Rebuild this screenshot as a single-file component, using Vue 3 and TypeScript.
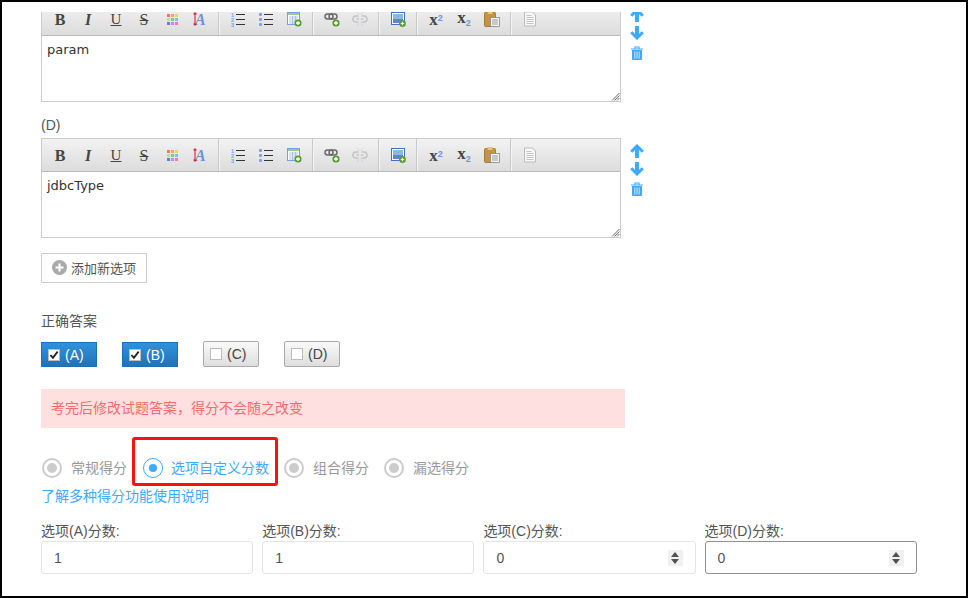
<script setup lang="ts">
import { ref } from "vue";

interface Editor {
  text: string;
  clipped: boolean;
}

const editors: Editor[] = [
  { text: "param", clipped: true },
  { text: "jdbcType", clipped: false },
];

const toolGroups: string[][] = [
  ["bold", "italic", "underline", "strike", "colors", "fontsize"],
  ["ol", "ul", "table"],
  ["link", "unlink"],
  ["image"],
  ["sup", "sub", "paste"],
  ["doc"],
];

const swatches = ["#ee7a6a", "#f2a65a", "#f0d45c", "#bfe08a", "#6fd08c", "#68c8e8", "#5f86d6", "#d884e0", "#ee78b8"];

const answers = ref([
  { label: "(A)", checked: true },
  { label: "(B)", checked: true },
  { label: "(C)", checked: false },
  { label: "(D)", checked: false },
]);

const modes = [
  { label: "常规得分", active: false },
  { label: "选项自定义分数", active: true },
  { label: "组合得分", active: false },
  { label: "漏选得分", active: false },
];

const scores = [
  { label: "选项(A)分数:", value: "1", spin: false, focus: false },
  { label: "选项(B)分数:", value: "1", spin: false, focus: false },
  { label: "选项(C)分数:", value: "0", spin: true, focus: false },
  { label: "选项(D)分数:", value: "0", spin: true, focus: true },
];
</script>

<template>
  <div class="frame">
    <template v-for="(ed, i) in editors" :key="i">
      <div v-if="i === 1" class="opt-label">(D)</div>
      <div class="opt-row" :class="{ clipped: ed.clipped }">
        <div class="editor">
          <div class="toolbar">
            <div v-for="(group, g) in toolGroups" :key="g" class="tool-group" :class="{ last: g === toolGroups.length - 1 }">
              <span v-for="tool in group" :key="tool" class="tool">
                <span v-if="tool === 'bold'" class="glyph bold">B</span>
                <span v-else-if="tool === 'italic'" class="glyph italic">I</span>
                <span v-else-if="tool === 'underline'" class="glyph under">U</span>
                <span v-else-if="tool === 'strike'" class="glyph strike">S</span>
                <span v-else-if="tool === 'sup'" class="glyph script">x<i class="sup">2</i></span>
                <span v-else-if="tool === 'sub'" class="glyph script">x<i class="sub">2</i></span>
                <span v-else-if="tool === 'colors'" class="swatches">
                  <i v-for="c in swatches" :key="c" :style="{ background: c }"></i>
                </span>
                <svg v-else-if="tool === 'fontsize'" width="16" height="16" viewBox="0 0 16 16">
                  <text x="3" y="13.500" font-family="Liberation Serif" font-size="16" font-weight="bold" font-style="italic" fill="#6f92d8">A</text>
                  <path d="M3 2v12M1.600 3.400 3 1.800l1.400 1.600M1.600 12.600 3 14.200l1.400-1.600" fill="none" stroke="#d8262c" stroke-width="1.100" />
                </svg>
                <svg v-else-if="tool === 'ol'" width="16" height="16" viewBox="0 0 16 16">
                  <text x="1" y="5.500" font-family="Liberation Sans" font-size="5.500" font-weight="bold" fill="#7c9ee0">1</text>
                  <text x="1" y="10.500" font-family="Liberation Sans" font-size="5.500" font-weight="bold" fill="#7c9ee0">2</text>
                  <text x="1" y="15.500" font-family="Liberation Sans" font-size="5.500" font-weight="bold" fill="#7c9ee0">3</text>
                  <path d="M6 3.500h9M6 8.500h9M6 13.500h9" stroke="#333" stroke-width="1" />
                </svg>
                <svg v-else-if="tool === 'ul'" width="16" height="16" viewBox="0 0 16 16">
                  <rect x="1" y="2" width="3" height="3" rx="1" fill="#7c9ee0" />
                  <rect x="1" y="7" width="3" height="3" rx="1" fill="#7c9ee0" />
                  <rect x="1" y="12" width="3" height="3" rx="1" fill="#7c9ee0" />
                  <path d="M6 3.500h9M6 8.500h9M6 13.500h9" stroke="#333" stroke-width="1" />
                </svg>
                <svg v-else-if="tool === 'table'" width="16" height="16" viewBox="0 0 16 16">
                  <rect x="1.500" y="1.500" width="12" height="12" fill="#fff" stroke="#7c9ee0" />
                  <rect x="2" y="2" width="11" height="2" fill="#9ccb7a" />
                  <path d="M3 6h9M3 8h9M3 10h9M3 12h9M6.500 5v8M9.500 5v8" stroke="#9db8e6" stroke-width=".8" />
                  <circle cx="12" cy="12" r="3.600" fill="#5a9a32" />
                  <path d="M10 12h4M12 10v4" stroke="#fff" stroke-width="1.300" />
                </svg>
                <svg v-else-if="tool === 'link'" width="16" height="16" viewBox="0 0 16 16">
                  <rect x="1" y="3" width="8" height="5" rx="2.500" fill="none" stroke="#6a6a6a" stroke-width="1.500" />
                  <rect x="5" y="3" width="8" height="5" rx="2.500" fill="none" stroke="#6a6a6a" stroke-width="1.500" />
                  <circle cx="12" cy="12" r="3.600" fill="#5a9a32" />
                  <path d="M10 12h4M12 10v4" stroke="#fff" stroke-width="1.300" />
                </svg>
                <svg v-else-if="tool === 'unlink'" width="16" height="16" viewBox="0 0 16 16">
                  <path d="M6.500 5H4a3 3 0 0 0 0 6h2.500M9.500 5H12a3 3 0 0 1 0 6H9.500M4.500 8h2.500M9 8h2.500" fill="none" stroke="#c4c4c4" stroke-width="1.500" />
                  <path d="M5.500 1l1.500 3M10.500 1 9 4M5.500 15 7 12M10.500 15 9 12" stroke="#c6d4ee" stroke-width="1" />
                </svg>
                <svg v-else-if="tool === 'image'" width="16" height="16" viewBox="0 0 16 16">
                  <rect x="1.500" y="1.500" width="13" height="12" fill="#fff" stroke="#4a6fb5" />
                  <rect x="3" y="3" width="10" height="9" fill="#8fb4e6" />
                  <rect x="3" y="8" width="10" height="4" fill="#5d87c8" />
                  <circle cx="12.500" cy="12.500" r="3.400" fill="#5a9a32" />
                  <path d="M10.700 12.500h3.600M12.500 10.700v3.600" stroke="#fff" stroke-width="1.200" />
                </svg>
                <svg v-else-if="tool === 'paste'" width="16" height="16" viewBox="0 0 16 16">
                  <rect x="0.500" y="1.500" width="11" height="14" rx="1" fill="#c8914a" stroke="#9a6a2a" stroke-width=".8" />
                  <rect x="3.500" y="0" width="5" height="3" fill="#e6c76a" />
                  <rect x="6.500" y="6.500" width="9" height="9" fill="#f4f4f4" stroke="#888" stroke-width=".8" />
                  <path d="M8 9h6M8 11h6M8 13h6" stroke="#888" stroke-width=".8" />
                </svg>
                <svg v-else-if="tool === 'doc'" width="16" height="16" viewBox="0 0 16 16">
                  <path d="M2.500 1h8l3 3v11h-11z" fill="#f8f8f8" stroke="#bbb" />
                  <path d="M4.500 4.500h5M4.500 6.500h7M4.500 8.500h7M4.500 10.500h7M4.500 12.500h7" stroke="#b5b5b5" stroke-width=".8" />
                </svg>
              </span>
            </div>
          </div>
          <div class="content">
            {{ ed.text }}
            <svg class="grip" width="9" height="9" viewBox="0 0 9 9">
              <path d="M8.500 1 1 8.500M8.500 3.500 3.500 8.500M8.500 6 6 8.500" stroke="#666" stroke-width="1" />
            </svg>
          </div>
        </div>
        <div class="side">
          <svg width="14" height="14" viewBox="0 0 14 14"><path d="M7 14V4" stroke="#3fa9ff" stroke-width="4" /><path d="M1.200 7.800 7 2l5.800 5.800" fill="none" stroke="#3fa9ff" stroke-width="3" /></svg>
          <svg width="14" height="14" viewBox="0 0 14 14"><path d="M7 0v10" stroke="#3fa9ff" stroke-width="4" /><path d="M1.200 6.200 7 12l5.800-5.800" fill="none" stroke="#3fa9ff" stroke-width="3" /></svg>
          <svg class="trash" width="14" height="14" viewBox="0 0 14 14">
            <path d="M1 3h12M5 3V1h4v2" fill="none" stroke="#3fa9ff" stroke-width="1.200" />
            <path d="M2 4h10v9a1 1 0 0 1-1 1H3a1 1 0 0 1-1-1z" fill="#3fa9ff" />
            <path d="M4.800 5.500v7M7 5.500v7M9.200 5.500v7" stroke="#cfe9ff" stroke-width="1" />
          </svg>
        </div>
      </div>
    </template>

    <button class="add-btn">
      <svg width="15" height="15" viewBox="0 0 15 15">
        <circle cx="7.500" cy="7.500" r="7.500" fill="#aaa" />
        <path d="M3.500 7.500h8M7.500 3.500v8" stroke="#fff" stroke-width="2.200" />
      </svg>
      添加新选项
    </button>

    <div class="section-title">正确答案</div>
    <div class="answers">
      <label v-for="a in answers" :key="a.label" class="answer" :class="{ on: a.checked }">
        <span class="box">
          <svg v-if="a.checked" width="10" height="10" viewBox="0 0 11 11"><path d="M1.500 5.500 4.300 8.500 9.500 1.800" fill="none" stroke="#222" stroke-width="2" /></svg>
        </span>
        {{ a.label }}
      </label>
    </div>

    <div class="alert">考完后修改试题答案，得分不会随之改变</div>

    <div class="modes">
      <div v-for="m in modes" :key="m.label" class="mode" :class="{ active: m.active }">
        <span class="radio"><i></i></span>
        <span class="mode-text">{{ m.label }}</span>
      </div>
      <div class="highlight"></div>
    </div>
    <a class="help">了解多种得分功能使用说明</a>

    <div class="scores">
      <div v-for="s in scores" :key="s.label" class="score">
        <div class="score-label">{{ s.label }}</div>
        <div class="field" :class="{ focus: s.focus }">
          <input type="text" :value="s.value" />
          <span v-if="s.spin" class="spin"><i class="up"></i><i class="down"></i></span>
        </div>
      </div>
    </div>
  </div>
</template>

<style scoped>
.frame {
  width: 968px;
  height: 598px;
  box-sizing: border-box;
  border: 2px solid #000;
  padding: 10px 0 0 39px;
  overflow: hidden;
  background: #fff;
  font-family: "Liberation Sans", "Noto Sans CJK SC", sans-serif;
  font-size: 14px;
  color: #555;
}

.opt-row {
  display: flex;
  height: 100px;
}
.opt-row.clipped {
  height: 90px;
  overflow: hidden;
  align-items: flex-end;
}
.opt-label {
  margin-top: 13px;
  height: 20px;
  line-height: 20px;
  margin-bottom: 3px;
}

.editor {
  width: 580px;
  height: 100px;
  flex: none;
  box-sizing: border-box;
  border: 1px solid #ccc;
  display: flex;
  flex-direction: column;
}
.toolbar {
  height: 33px;
  flex: none;
  box-sizing: border-box;
  border-bottom: 1px solid #bbb;
  background: linear-gradient(#f3f3f3, #dcdcdc);
  display: flex;
}
.tool-group {
  display: flex;
  padding: 0 4px;
  border-right: 1px solid #c8c8c8;
  box-shadow: 1px 0 0 #f4f4f4;
  margin-right: 1px;
}
.tool-group.last {
  border-right: none;
  box-shadow: none;
}
.tool {
  width: 28px;
  display: flex;
  align-items: center;
  justify-content: center;
}
.glyph {
  font-family: "Liberation Serif", serif;
  font-size: 16px;
  font-weight: bold;
  color: #444;
  line-height: 13px;
}
.glyph.italic {
  font-style: italic;
}
.glyph.under {
  font-size: 15px;
  font-weight: normal;
  text-decoration: underline;
}
.glyph.strike {
  font-weight: normal;
  text-decoration: line-through;
}
.glyph.script {
  font-size: 17px;
  display: flex;
}
.glyph i {
  font: bold 9px/9px "Liberation Sans", sans-serif;
  color: #6f92d8;
}
.sup {
  margin-top: 1px;
}
.sub {
  margin-top: 8px;
}
.swatches {
  width: 11px;
  height: 11px;
  display: grid;
  grid-template-columns: repeat(3, 3px);
  grid-auto-rows: 3px;
  gap: 1px;
}
.content {
  flex: 1;
  position: relative;
  padding: 5px;
  font-family: "DejaVu Sans", sans-serif;
  font-size: 13px;
  line-height: 17px;
  color: #333;
}
.grip {
  position: absolute;
  right: 0;
  bottom: 0;
}

.side {
  margin-left: 9px;
  width: 14px;
  padding-top: 6px;
  display: flex;
  flex-direction: column;
  gap: 4px;
  height: 100px;
  box-sizing: border-box;
  flex: none;
}
.trash {
  margin-top: 2px;
}

.add-btn {
  display: flex;
  align-items: center;
  gap: 4px;
  margin-top: 15px;
  width: 106px;
  height: 30px;
  box-sizing: border-box;
  padding: 0 0 2px 10px;
  background: #fff;
  border: 1px solid #ccc;
  font: 13px "Liberation Sans", "Noto Sans CJK SC", sans-serif;
  color: #555;
}

.section-title {
  margin-top: 28px;
  line-height: 20px;
}
.answers {
  display: flex;
  gap: 25px;
  margin-top: 10px;
  height: 26px;
  align-items: flex-end;
}
.answer {
  width: 56px;
  height: 26px;
  box-sizing: border-box;
  display: flex;
  align-items: center;
  gap: 5px;
  padding-left: 6px;
  border: 1px solid #aaa;
  border-radius: 2px;
  background: linear-gradient(#fafafa, #dedede);
  color: #444;
}
.answer.on {
  height: 25px;
  border: 1px solid #1c6fb8;
  border-radius: 0;
  background: linear-gradient(#2f92dc, #1f72b8);
  color: #fff;
}
.box {
  width: 12px;
  height: 12px;
  box-sizing: border-box;
  border: 1px solid #bbb;
  background: #fff;
  display: flex;
  align-items: center;
  justify-content: center;
}

.alert {
  margin-top: 22px;
  width: 584px;
  height: 39px;
  box-sizing: border-box;
  padding-left: 10px;
  line-height: 39px;
  background: #ffe0e0;
  color: #f56c6c;
}

.modes {
  position: relative;
  display: flex;
  gap: 15px;
  margin: 30px 0 0 1px;
  height: 20px;
}
.mode {
  display: flex;
  align-items: center;
  gap: 9px;
  color: #999;
}
.mode-text {
  padding-bottom: 2px;
}
.mode.active {
  color: #3fa9ff;
  gap: 8px;
  margin-left: 1px;
}
.radio {
  width: 20px;
  height: 20px;
  box-sizing: border-box;
  border: 2px solid #ccc;
  border-radius: 50%;
  display: flex;
  align-items: center;
  justify-content: center;
}
.radio i {
  width: 10px;
  height: 10px;
  border-radius: 50%;
  background: #ccc;
}
.mode.active .radio {
  border: 1.5px solid #3fa9ff;
}
.mode.active .radio i {
  width: 8px;
  height: 8px;
  background: #3fa9ff;
}
.highlight {
  position: absolute;
  left: 90px;
  top: -21px;
  width: 146px;
  height: 49px;
  box-sizing: border-box;
  border: 3px solid #f5130d;
  border-radius: 3px;
}

.help {
  display: block;
  margin-top: 8px;
  line-height: 20px;
  color: #3fa9ff;
}

.scores {
  display: flex;
  gap: 9px;
  margin-top: 16px;
}
.score {
  width: 212.2px;
}
.score-label {
  line-height: 19px;
}
.field {
  height: 33px;
  box-sizing: border-box;
  border: 1px solid #e4e4e4;
  border-radius: 3px;
  display: flex;
  align-items: center;
  padding: 0 12px;
}
.field.focus {
  border-color: #8f8f8f;
}
.field input {
  flex: 1;
  min-width: 0;
  border: none;
  outline: none;
  padding: 0;
  background: none;
  font: 14px "Liberation Sans", sans-serif;
  color: #555;
}
.spin {
  width: 15px;
  height: 16px;
  flex: none;
  background: #f0f0f0;
  display: flex;
  flex-direction: column;
  align-items: center;
  justify-content: center;
  gap: 2px;
}
.spin i {
  width: 0;
  height: 0;
  border-left: 4px solid transparent;
  border-right: 4px solid transparent;
}
.spin .up {
  border-bottom: 5px solid #505050;
}
.spin .down {
  border-top: 5px solid #505050;
}
</style>
